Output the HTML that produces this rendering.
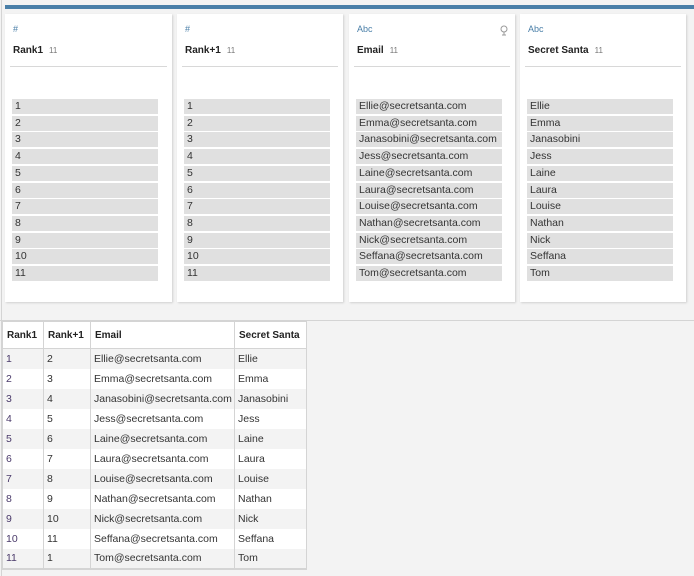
<!DOCTYPE html>
<html><head><style>
*{margin:0;padding:0;box-sizing:border-box}
body{width:694px;height:576px;background:#f3f3f3;font-family:"Liberation Sans",sans-serif;position:relative;overflow:hidden;color:#333}
.vl{position:absolute;left:1px;top:0;width:1px;height:576px;background:#d4d4d4}
.hl{position:absolute;left:0;top:320px;width:694px;height:1px;background:#d4d4d4}
.blue{position:absolute;left:5px;top:5px;width:689px;height:4px;background:#4a7fa8}
.card{position:absolute;top:14px;height:288px;background:#fff;box-shadow:1px 1px 2px #d0d0d0}
.icon{position:absolute;left:8px;top:10px;font-size:9px;color:#4a7fa8}
.title{position:absolute;left:8px;top:31px;font-size:10px;font-weight:bold;color:#222}
.title span{font-weight:normal;color:#777;font-size:8px;margin-left:6px}
.hr{position:absolute;left:5px;right:5px;top:52px;height:1px;background:#d8d8d8}
.bar{position:absolute;left:7px;width:146px;height:15px;background:#e0e0e0;font-size:10.5px;line-height:15px;padding-left:3px;color:#333}
table{position:absolute;left:2px;top:321px;border-collapse:collapse;font-size:10.5px;background:#fff}
td{border-left:1px solid #d4d4d4;border-right:1px solid #d4d4d4;height:20px;padding-left:3px;white-space:nowrap}
th{height:27px;text-align:left;padding-left:4px;border:1px solid #d4d4d4;font-weight:bold;font-size:10px;color:#222}
tr.g td{background:#f3f3f3}
td.p{color:#4a3a6a}
tr:last-child td{border-bottom:2px solid #d4d4d4}
</style></head><body>
<div class="vl"></div><div class="hl"></div><div class="blue"></div>
<div class="card" style="left:5px;width:167px"><div class="icon">#</div><div class="title">Rank1<span>11</span></div><div class="hr"></div>
<div class="bar" style="top:85px">1</div><div class="bar" style="top:101.7px">2</div><div class="bar" style="top:118.4px">3</div><div class="bar" style="top:135.1px">4</div><div class="bar" style="top:151.8px">5</div><div class="bar" style="top:168.5px">6</div><div class="bar" style="top:185.2px">7</div><div class="bar" style="top:201.9px">8</div><div class="bar" style="top:218.6px">9</div><div class="bar" style="top:235.3px">10</div><div class="bar" style="top:252px">11</div></div>
<div class="card" style="left:177px;width:166px"><div class="icon">#</div><div class="title">Rank+1<span>11</span></div><div class="hr"></div>
<div class="bar" style="top:85px">1</div><div class="bar" style="top:101.7px">2</div><div class="bar" style="top:118.4px">3</div><div class="bar" style="top:135.1px">4</div><div class="bar" style="top:151.8px">5</div><div class="bar" style="top:168.5px">6</div><div class="bar" style="top:185.2px">7</div><div class="bar" style="top:201.9px">8</div><div class="bar" style="top:218.6px">9</div><div class="bar" style="top:235.3px">10</div><div class="bar" style="top:252px">11</div></div>
<div class="card" style="left:349px;width:166px"><div class="icon">Abc</div><svg style="position:absolute;right:7px;top:11px" width="8" height="11" viewBox="0 0 8 11"><circle cx="4" cy="4" r="3" fill="none" stroke="#999" stroke-width="1"/><line x1="4" y1="7" x2="4" y2="10" stroke="#999"/><line x1="2" y1="10" x2="6" y2="10" stroke="#999"/></svg><div class="title">Email<span>11</span></div><div class="hr"></div>
<div class="bar" style="top:85px">Ellie@secretsanta.com</div><div class="bar" style="top:101.7px">Emma@secretsanta.com</div><div class="bar" style="top:118.4px">Janasobini@secretsanta.com</div><div class="bar" style="top:135.1px">Jess@secretsanta.com</div><div class="bar" style="top:151.8px">Laine@secretsanta.com</div><div class="bar" style="top:168.5px">Laura@secretsanta.com</div><div class="bar" style="top:185.2px">Louise@secretsanta.com</div><div class="bar" style="top:201.9px">Nathan@secretsanta.com</div><div class="bar" style="top:218.6px">Nick@secretsanta.com</div><div class="bar" style="top:235.3px">Seffana@secretsanta.com</div><div class="bar" style="top:252px">Tom@secretsanta.com</div></div>
<div class="card" style="left:520px;width:166px"><div class="icon">Abc</div><div class="title">Secret Santa<span>11</span></div><div class="hr"></div>
<div class="bar" style="top:85px">Ellie</div><div class="bar" style="top:101.7px">Emma</div><div class="bar" style="top:118.4px">Janasobini</div><div class="bar" style="top:135.1px">Jess</div><div class="bar" style="top:151.8px">Laine</div><div class="bar" style="top:168.5px">Laura</div><div class="bar" style="top:185.2px">Louise</div><div class="bar" style="top:201.9px">Nathan</div><div class="bar" style="top:218.6px">Nick</div><div class="bar" style="top:235.3px">Seffana</div><div class="bar" style="top:252px">Tom</div></div>
<table>
<tr><th style="width:41px">Rank1</th><th style="width:47px">Rank+1</th><th style="width:144px">Email</th><th style="width:72px">Secret Santa</th></tr>
<tr class="g"><td class="p">1</td><td>2</td><td>Ellie@secretsanta.com</td><td>Ellie</td></tr>
<tr><td class="p">2</td><td>3</td><td>Emma@secretsanta.com</td><td>Emma</td></tr>
<tr class="g"><td class="p">3</td><td>4</td><td>Janasobini@secretsanta.com</td><td>Janasobini</td></tr>
<tr><td class="p">4</td><td>5</td><td>Jess@secretsanta.com</td><td>Jess</td></tr>
<tr class="g"><td class="p">5</td><td>6</td><td>Laine@secretsanta.com</td><td>Laine</td></tr>
<tr><td class="p">6</td><td>7</td><td>Laura@secretsanta.com</td><td>Laura</td></tr>
<tr class="g"><td class="p">7</td><td>8</td><td>Louise@secretsanta.com</td><td>Louise</td></tr>
<tr><td class="p">8</td><td>9</td><td>Nathan@secretsanta.com</td><td>Nathan</td></tr>
<tr class="g"><td class="p">9</td><td>10</td><td>Nick@secretsanta.com</td><td>Nick</td></tr>
<tr><td class="p">10</td><td>11</td><td>Seffana@secretsanta.com</td><td>Seffana</td></tr>
<tr class="g"><td class="p">11</td><td>1</td><td>Tom@secretsanta.com</td><td>Tom</td></tr>
</table>
</body></html>
